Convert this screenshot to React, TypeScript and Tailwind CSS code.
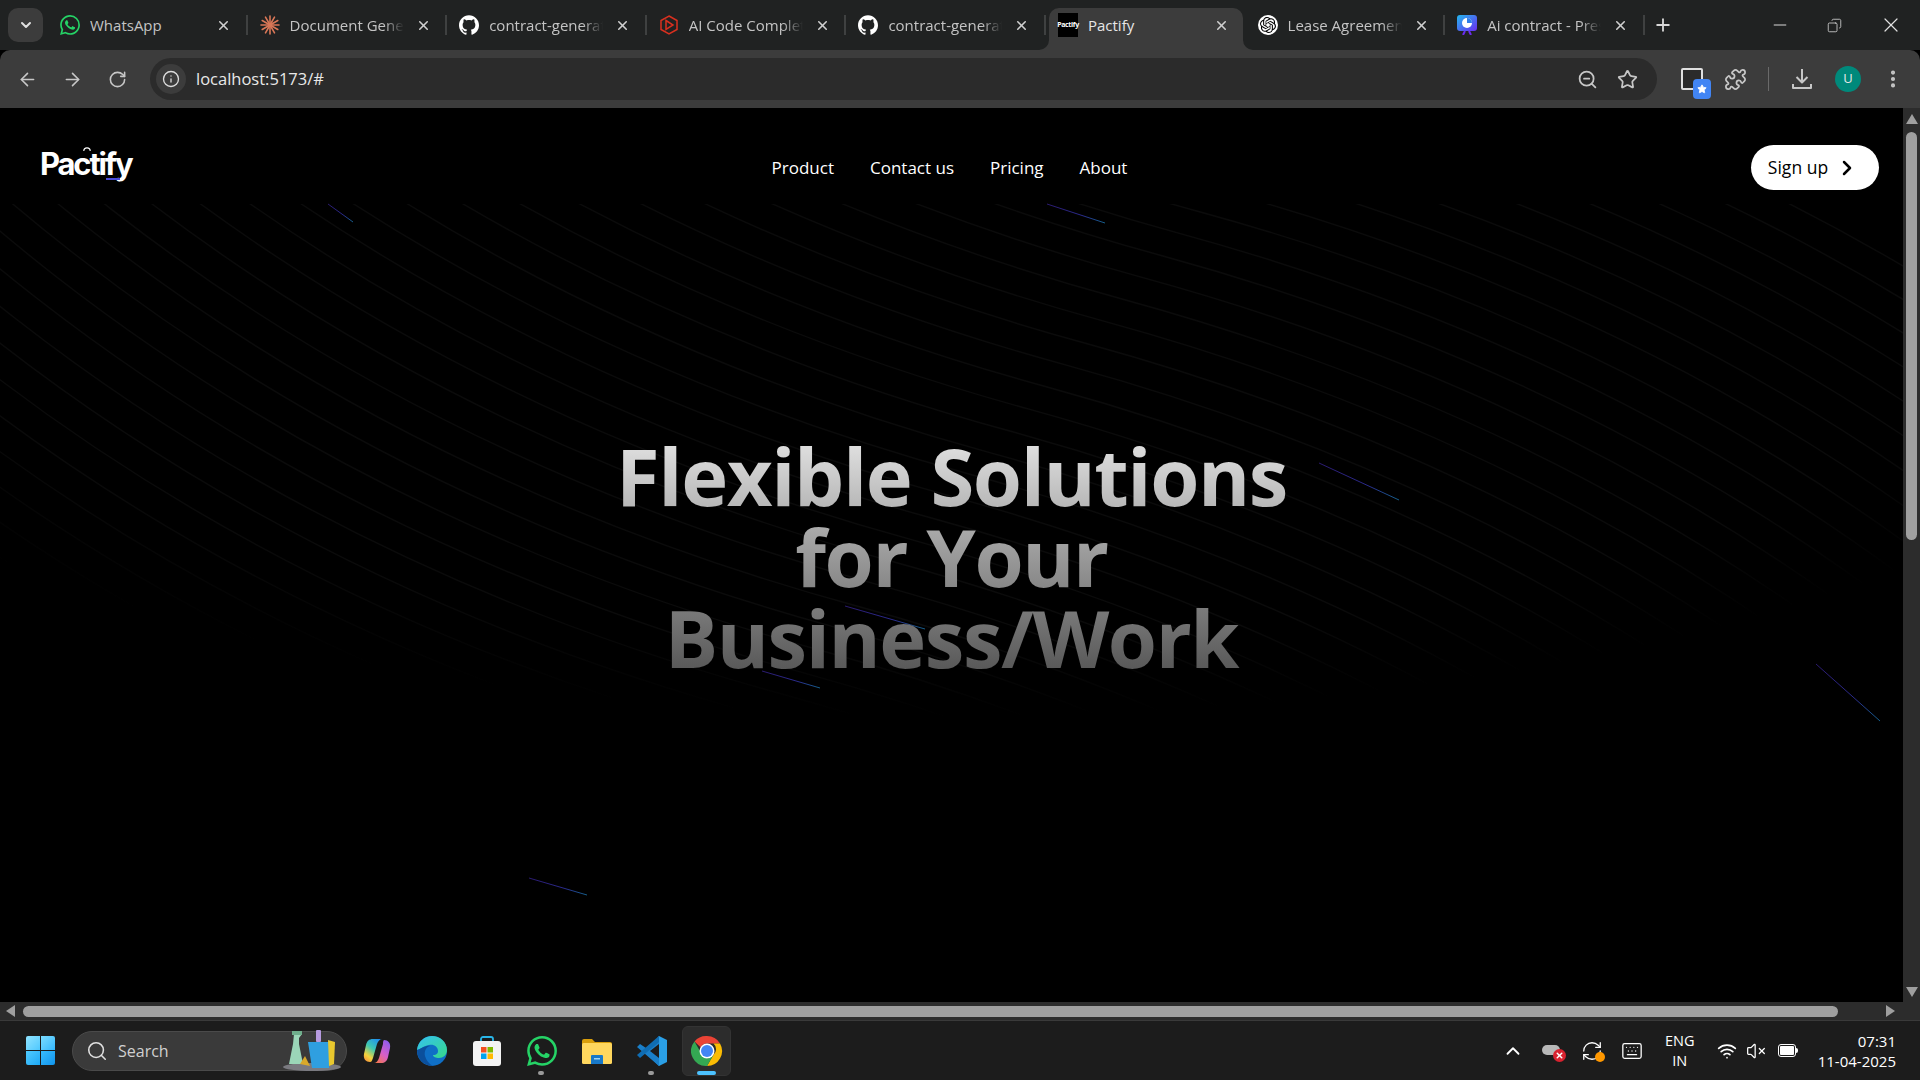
import React from 'react';
import { ArrowLeft, ArrowRight, RotateCw, Info, ZoomOut, Star, Puzzle, ChevronDown, ChevronRight, ChevronUp, X, Plus, Minus, EllipsisVertical, Search, Wifi, VolumeX, RefreshCw, Keyboard, Copy } from 'lucide-react';
import { SiWhatsapp, SiGithub, SiOpenai } from 'react-icons/si';

const FONT = "font-['Open_Sans',sans-serif]";

// same beam paths as the hero background: each one is shifted by a fixed step
const PATHS = Array.from({ length: 50 }, (_, i) => {
  const dx = 7 * i;
  const dy = -8 * i;
  const p = (x: number, y: number) => `${x + dx} ${y + dy}`;
  return `M${p(-380, -189)}C${p(-380, -189)} ${p(-312, 216)} ${p(152, 343)}C${p(616, 470)} ${p(684, 875)} ${p(684, 875)}`;
}).join('');

const BEAMS = [
  [328, 96, 353, 114],
  [1047, 96, 1105, 115],
  [1319, 355, 1399, 392],
  [845, 498, 925, 521],
  [762, 563, 820, 580],
  [529, 770, 587, 787],
  [1816, 556, 1880, 613],
];

function ClaudeIcon() {
  return (
    <svg viewBox="0 0 20 20" className="h-5 w-5" stroke="#d97757" strokeWidth="1.6" strokeLinecap="round">
      {[0, 30, 60, 90, 120, 150, 180, 210, 240, 270, 300, 330].map((a) => (
        <line key={a} x1="10" y1="10" x2="10" y2="1" transform={`rotate(${a} 10 10)`} />
      ))}
    </svg>
  );
}

function CodeIcon() {
  return (
    <svg viewBox="0 0 20 20" className="h-5 w-5" fill="none" stroke="#d9301f" strokeWidth="1.5">
      <path d="M10 1l8 4.5v9L10 19l-8-4.5v-9z" />
      <path d="M7 5.5l7 4.5-7 4.5z" />
    </svg>
  );
}

function SlidesIcon() {
  return (
    <svg viewBox="0 0 20 20" className="h-5 w-5">
      <defs>
        <linearGradient id="slides" x1="0" y1="0" x2="1" y2="1">
          <stop offset="0" stopColor="#22b8ee" />
          <stop offset="1" stopColor="#6b2cf0" />
        </linearGradient>
      </defs>
      <rect x="0" y="0" width="20" height="16" rx="3" fill="url(#slides)" />
      <path d="M6 20l2-4M14 20l-2-4" stroke="#6b2cf0" strokeWidth="2" />
      <circle cx="10" cy="8" r="5" fill="#fff" />
      <path d="M10 8V3a5 5 0 0 1 5 5z" fill="#2f7fe8" />
    </svg>
  );
}

const TABS: { title: string; icon: React.ReactNode; active?: boolean }[] = [
  { title: 'WhatsApp', icon: <SiWhatsapp className="h-5 w-5 text-[#25d366]" /> },
  { title: 'Document Generator', icon: <ClaudeIcon /> },
  { title: 'contract-generator', icon: <SiGithub className="h-5 w-5 text-white" /> },
  { title: 'AI Code Completion', icon: <CodeIcon /> },
  { title: 'contract-generator', icon: <SiGithub className="h-5 w-5 text-white" /> },
  {
    title: 'Pactify',
    active: true,
    icon: (
      <span className="flex h-6 w-5 items-center justify-center bg-black text-[7px] font-bold tracking-tighter text-white">Pactify</span>
    ),
  },
  {
    title: 'Lease Agreement',
    icon: (
      <span className="flex h-5 w-5 items-center justify-center rounded-full bg-white">
        <SiOpenai className="h-4 w-4 text-black" />
      </span>
    ),
  },
  { title: 'Ai contract - Presentation', icon: <SlidesIcon /> },
];

function Tab({ title, icon, active }: { title: string; icon: React.ReactNode; active?: boolean }) {
  return (
    <div className="relative flex h-[50px] w-[199.6px] shrink-0 items-center">
      {active && (
        <div className="absolute inset-x-[3px] bottom-0 top-2 rounded-t-[10px] bg-[#3c3c3c]">
          <svg viewBox="0 0 10 10" className="absolute -left-2.5 bottom-0 h-2.5 w-2.5"><path d="M10 0v10H0a10 10 0 0 0 10-10z" fill="#3c3c3c" /></svg>
          <svg viewBox="0 0 10 10" className="absolute -right-2.5 bottom-0 h-2.5 w-2.5"><path d="M0 0v10h10A10 10 0 0 1 0 0z" fill="#3c3c3c" /></svg>
        </div>
      )}
      <div className="relative ml-[12px] flex w-5 items-center justify-center">{icon}</div>
      <span
        className={`relative ml-[10px] w-[114px] overflow-hidden whitespace-nowrap text-[15px] ${active ? 'text-[#e6e6e6]' : 'text-[#c4c4c4]'} ${title.length > 9 ? '[mask-image:linear-gradient(to_right,black_82%,transparent)]' : ''}`}
      >
        {title}
      </span>
      <X className="relative ml-[12px] h-[15px] w-[15px] text-[#d0d0d0]" strokeWidth={2.5} />
      {!active && <div className="absolute right-[0px] top-[15px] h-[20px] w-[2px] bg-[#3f4141]" />}
    </div>
  );
}

function Chrome() {
  return (
    <svg viewBox="0 0 32 32" className="h-8 w-8">
      <path d="M16 1a15 15 0 0 1 13 7.5H16a7.5 7.5 0 0 0-6.5 3.8L3.5 6.5A15 15 0 0 1 16 1z" fill="#ea4335" />
      <path d="M29 8.5A15 15 0 0 1 16 31l6.5-11.2a7.5 7.5 0 0 0 0-11.3z" fill="#fbbc04" />
      <path d="M16 31A15 15 0 0 1 3.5 6.5l6 10.5a7.5 7.5 0 0 0 7.5 6.4l5.5-3.6z" fill="#34a853" />
      <circle cx="16" cy="16" r="7.5" fill="#fff" />
      <circle cx="16" cy="16" r="6" fill="#4285f4" />
    </svg>
  );
}

function Edge() {
  return (
    <svg viewBox="0 0 32 32" className="h-8 w-8">
      <defs>
        <linearGradient id="edgeA" x1="0" y1="0" x2="1" y2="1">
          <stop offset="0" stopColor="#35c1f1" />
          <stop offset="1" stopColor="#36d98a" />
        </linearGradient>
      </defs>
      <circle cx="16" cy="16" r="15" fill="#0f6fc6" />
      <path d="M1 15C2 6 9 1 16 1c8 0 15 6 15 14 0 5-4 8-8 8-3 0-6-1-6-3 4 0 5-2 5-4 0-4-4-7-9-6-6 1-10 5-12 5z" fill="url(#edgeA)" />
      <path d="M14 11c-4 1-6 5-5 10 1 4 4 8 8 10-8 0-16-6-16-16 3 0 8-5 13-4z" fill="#0b4f9c" />
    </svg>
  );
}

function Store() {
  return (
    <svg viewBox="0 0 32 32" className="h-8 w-8">
      <path d="M10 7V4a2 2 0 0 1 2-2h8a2 2 0 0 1 2 2v3" fill="none" stroke="#29b6e8" strokeWidth="1.8" />
      <rect x="2" y="6" width="28" height="25" rx="3" fill="#f3f3f3" />
      <rect x="10" y="12" width="5.5" height="5.5" fill="#f25022" />
      <rect x="16.5" y="12" width="5.5" height="5.5" fill="#7fba00" />
      <rect x="10" y="18.5" width="5.5" height="5.5" fill="#00a4ef" />
      <rect x="16.5" y="18.5" width="5.5" height="5.5" fill="#ffb900" />
    </svg>
  );
}

function Folder() {
  return (
    <svg viewBox="0 0 32 32" className="h-8 w-8">
      <path d="M1 6a2 2 0 0 1 2-2h8l3 3h15a2 2 0 0 1 2 2v3H1z" fill="#d99e0b" />
      <rect x="1" y="8" width="30" height="21" rx="1.5" fill="#ffd75e" />
      <path d="M10 21a1 1 0 0 1 1-1h10a1 1 0 0 1 1 1v8H10z" fill="#1878c8" />
      <rect x="13" y="23" width="6" height="1.5" fill="#9fd4f5" />
    </svg>
  );
}

function VsCode() {
  return (
    <svg viewBox="0 0 32 32" className="h-8 w-8">
      <path d="M23 1l8 4v22l-8 4-13-13z" fill="#2a9fe6" />
      <path d="M23 1v30L1 12l3-3 9 6z" fill="#1a7fc9" />
      <path d="M1 20l3 3 19-16V1z" fill="#0f6db3" />
      <path d="M23 9v14l-9-7z" fill="#1c1c1c" />
    </svg>
  );
}

function Copilot() {
  return (
    <svg viewBox="0 0 32 32" className="h-8 w-8">
      <defs>
        <linearGradient id="copA" x1="0.8" y1="0" x2="0.2" y2="1">
          <stop offset="0" stopColor="#1f8ff0" />
          <stop offset="0.45" stopColor="#3fc9b0" />
          <stop offset="0.8" stopColor="#f5d33c" />
          <stop offset="1" stopColor="#f39a3c" />
        </linearGradient>
        <linearGradient id="copB" x1="0.8" y1="0" x2="0.2" y2="1">
          <stop offset="0" stopColor="#8d5cf0" />
          <stop offset="0.55" stopColor="#d75fc8" />
          <stop offset="1" stopColor="#f5764f" />
        </linearGradient>
      </defs>
      <path d="M23 5c4 0 7 3 6 8l-2 9c-1 4-3 6-7 6h-7c2 0 4-2 5-5l4-14c0-2 0-3 1-4z" fill="url(#copB)" />
      <path d="M9 27c-4 0-7-3-6-8l2-9c1-4 3-6 7-6h9c-2 0-4 2-5 5l-4 14c-1 2-1 4-3 4z" fill="url(#copA)" />
    </svg>
  );
}

function Cleaning() {
  return (
    <svg viewBox="0 0 60 44" className="h-[44px] w-[60px]">
      <ellipse cx="30" cy="39" rx="29" ry="4" fill="#7a7a80" />
      <path d="M12 6h8l-3 4v6l4 20H7l4-20z" fill="#9bd6b8" />
      <rect x="10" y="3" width="10" height="4" fill="#6fae8c" />
      <rect x="34" y="2" width="5" height="12" rx="1" fill="#b79be0" />
      <path d="M26 14h24l-3 26H30z" fill="#2f9fe0" />
      <path d="M46 12l7 2-1 22-5 2z" fill="#e9c82e" />
      <path d="M18 36l5-8 5 10z" fill="#d9a92a" />
    </svg>
  );
}

function Triangle({ dir, className }: { dir: 'up' | 'down' | 'left' | 'right'; className?: string }) {
  const shape = {
    up: '0,10 5,0 10,10',
    down: '0,0 10,0 5,10',
    left: '10,0 10,10 0,5',
    right: '0,0 0,10 10,5',
  }[dir];
  return (
    <svg viewBox="0 0 10 10" preserveAspectRatio="none" className={className}>
      <polygon points={shape} fill="#9f9f9f" />
    </svg>
  );
}

function TaskIcon({ children, dot, active }: { children: React.ReactNode; dot?: boolean; active?: boolean }) {
  return (
    <div className="relative flex h-[50px] w-[55px] items-center justify-center">
      {active && <div className="absolute inset-y-0 left-[3px] w-[49px] rounded-md border border-[#333] bg-[#2c2c2c]" />}
      <div className="relative">{children}</div>
      {dot && <div className="absolute bottom-[1px] left-[24px] h-[4px] w-[6px] rounded-full bg-[#9a9a9a]" />}
      {active && <div className="absolute bottom-[1px] left-[18px] h-[4px] w-[19px] rounded-full bg-[#4cc2ff]" />}
    </div>
  );
}

export default function App() {
  return (
    <div className={`flex h-screen w-full flex-col overflow-hidden bg-black ${FONT}`}>
      {/* tab strip */}
      <div className="flex h-[50px] shrink-0 items-center bg-[#202222]">
        <div className="ml-[8px] mr-[5px] flex h-[34px] w-[35px] shrink-0 items-center justify-center rounded-[10px] bg-[#3c3c3c]">
          <ChevronDown className="h-4 w-4 text-[#e0e0e0]" strokeWidth={3} />
        </div>
        {TABS.map((t, i) => (
          <Tab key={i} title={t.title} icon={t.icon} active={t.active} />
        ))}
        <Plus className="ml-[8px] h-5 w-5 text-[#d8d8d8]" strokeWidth={2.2} />
        <div className="ml-auto flex items-center">
          <div className="flex w-[55px] justify-center"><Minus className="h-5 w-5 text-[#d8d8d8]" strokeWidth={1.2} /></div>
          <div className="flex w-[55px] justify-center"><Copy className="h-[15px] w-[15px] -scale-x-100 text-[#d8d8d8]" strokeWidth={1.3} /></div>
          <div className="flex w-[58px] justify-center"><X className="h-6 w-6 text-[#e0e0e0]" strokeWidth={1.2} /></div>
        </div>
      </div>

      {/* toolbar */}
      <div className="flex h-[58px] shrink-0 items-center rounded-t-[10px] bg-[#3c3c3c] pl-[9px] text-[#c7c7c7]">
        <div className="flex w-[36px] justify-center"><ArrowLeft className="h-[21px] w-[21px]" strokeWidth={1.8} /></div>
        <div className="ml-[9px] flex w-[36px] justify-center"><ArrowRight className="h-[21px] w-[21px]" strokeWidth={1.8} /></div>
        <div className="ml-[9px] flex w-[36px] justify-center"><RotateCw className="h-[19px] w-[19px]" strokeWidth={2} /></div>
        <div className="ml-[15px] flex h-[42px] w-[1507px] items-center rounded-full bg-[#2b2b2b]">
          <div className="ml-[6px] flex h-[30px] w-[30px] items-center justify-center rounded-full bg-[#3c3c3c]">
            <Info className="h-[18px] w-[18px] text-[#dcdcdc]" strokeWidth={1.8} />
          </div>
          <span className="ml-[10px] text-[16.5px] text-[#e8e8e8]">localhost:5173/#</span>
          <ZoomOut className="ml-auto h-[21px] w-[21px]" strokeWidth={2} />
          <Star className="ml-[19px] mr-[19px] h-[21px] w-[21px]" strokeWidth={2} />
        </div>
        <div className="relative ml-[24px] h-[22px] w-[22px] rounded-[2px] border-2 border-[#e0e0e0] bg-[#2b2b2b]">
          <div className="absolute -bottom-[11px] -right-[10px] flex h-[20px] w-[18px] items-center justify-center rounded-[4px] bg-[#4285f4]">
            <Star className="h-[10px] w-[10px] fill-white text-white" />
          </div>
        </div>
        <Puzzle className="ml-[21px] h-[23px] w-[23px]" strokeWidth={1.8} />
        <div className="ml-[21px] h-[24px] w-[1px] bg-[#6a6a6a]" />
        <svg viewBox="0 0 24 24" className="ml-[21px] h-[24px] w-[24px]" fill="none" stroke="#c7c7c7" strokeWidth="2" strokeLinejoin="round">
          <path d="M12 2v13M6.5 10l5.5 5.5 5.5-5.5M3 17v4h18v-4" />
        </svg>
        <div className="ml-[21px] flex h-[26px] w-[26px] items-center justify-center rounded-full bg-[#00897b] text-[13px] text-[#e8e8e8]">U</div>
        <EllipsisVertical className="ml-[21px] h-[22px] w-[22px]" strokeWidth={2.5} />
      </div>

      {/* page + vertical scrollbar */}
      <div className="flex min-h-0 flex-1">
        <main className="relative min-w-0 flex-1 overflow-hidden bg-black">
          <div className="absolute inset-x-0 bottom-0 top-[96px] overflow-hidden">
            <svg className="h-full w-full" viewBox="0 0 696 316" preserveAspectRatio="xMidYMid slice" fill="none">
              <defs>
                <radialGradient id="beamFade" cx="0" cy="0" r="1" gradientUnits="userSpaceOnUse" gradientTransform="translate(352 34) rotate(90) scale(555 1560.62)">
                  <stop offset="0.0666" stopColor="#d4d4d4" />
                  <stop offset="0.243" stopColor="#d4d4d4" />
                  <stop offset="0.3" stopColor="#d4d4d4" stopOpacity="0" />
                </radialGradient>
              </defs>
              <path d={PATHS} stroke="url(#beamFade)" strokeOpacity="0.05" strokeWidth="0.5" />
            </svg>
          </div>
          <svg className="absolute inset-0 h-full w-full" fill="none">
            <defs>
              {BEAMS.map(([x1, y1, x2, y2], i) => (
                <linearGradient key={i} id={`beam${i}`} gradientUnits="userSpaceOnUse" x1={x1} y1={y1} x2={x2} y2={y2}>
                  <stop offset="0" stopColor="#2b1a70" />
                  <stop offset="0.6" stopColor="#2a2a8c" />
                  <stop offset="1" stopColor="#15608c" />
                </linearGradient>
              ))}
            </defs>
            {BEAMS.map(([x1, y1, x2, y2], i) => (
              <line key={i} x1={x1} y1={y1} x2={x2} y2={y2} stroke={`url(#beam${i})`} strokeWidth="1" />
            ))}
          </svg>

          <div className="relative flex h-full flex-col">
            <header className="flex items-start justify-between pl-[40px] pr-[24px] pt-[37px]">
              <div className="relative mt-[1px] w-[108px]">
                <span className="font-['Inter',sans-serif] text-[31px] font-bold leading-[36px] tracking-[-0.07em] text-white">Pactify</span>
                <div className="absolute left-[66px] top-[32px] h-[2px] w-[14px] bg-[#4a4ad8]" />
                <svg viewBox="0 0 10 6" className="absolute left-[43px] top-[1px] h-[5px] w-[8px]" fill="none" stroke="#fff" strokeWidth="1.4"><path d="M1 5a4 4 0 0 1 8 0" /></svg>
              </div>
              <nav className="mt-[9px] flex items-center gap-[36px] text-[17px] leading-[28px] text-white">
                <a>Product</a>
                <a>Contact us</a>
                <a>Pricing</a>
                <a>About</a>
              </nav>
              <button className="flex h-[45px] w-[128px] items-center justify-center gap-[7px] rounded-full bg-white pr-[3px] text-[17.5px] text-black">
                Sign up
                <ChevronRight className="h-6 w-6" strokeWidth={2.5} />
              </button>
            </header>
            <div className="mt-[245px] flex justify-center">
              <h1 className="bg-gradient-to-b from-neutral-200 to-neutral-600 bg-clip-text pb-[4px] text-center text-[79.5px] font-bold leading-[81px] tracking-[-0.018em] text-transparent">
                Flexible Solutions
                <br />
                for Your
                <br />
                Business/Work
              </h1>
            </div>
          </div>
        </main>
        <div className="flex w-[17px] shrink-0 flex-col items-center bg-[#2c2c2c] pt-[6px]">
          <Triangle dir="up" className="h-[10px] w-[12px]" />
          <div className="mt-[8px] h-[408px] w-[11px] rounded-full bg-[#9f9f9f]" />
          <Triangle dir="down" className="mb-[5px] mt-auto h-[10px] w-[12px]" />
        </div>
      </div>

      {/* horizontal scrollbar */}
      <div className="flex h-[18px] shrink-0 items-center bg-[#2c2c2c]">
        <Triangle dir="left" className="ml-[6px] h-[12px] w-[9px]" />
        <div className="ml-[8px] h-[11px] w-[1815px] rounded-full bg-[#9f9f9f]" />
        <Triangle dir="right" className="ml-[48px] h-[12px] w-[9px]" />
      </div>

      {/* taskbar */}
      <div className="flex h-[60px] shrink-0 items-center border-t border-[#3a3a3a] bg-[#1c1c1c] text-white">
        <div className="ml-[26px] grid h-[29px] w-[29px] grid-cols-2 gap-[1px]">
          <div className="rounded-tl-[2px] bg-gradient-to-br from-[#8fe4ff] to-[#4cc8ff]" />
          <div className="rounded-tr-[2px] bg-gradient-to-br from-[#7adcff] to-[#2fb8ff]" />
          <div className="rounded-bl-[2px] bg-gradient-to-br from-[#4fcbff] to-[#19a8f5]" />
          <div className="rounded-br-[2px] bg-gradient-to-br from-[#37bdff] to-[#0f94ec]" />
        </div>
        <div className="relative ml-[17px] flex h-[40px] w-[275px] items-center rounded-full border border-[#4a4a4a] bg-[#3a3a3a]">
          <Search className="ml-[13px] h-[22px] w-[22px] text-[#e0e0e0]" strokeWidth={1.7} />
          <span className="ml-[10px] text-[16px] text-[#d0d0d0]">Search</span>
          <div className="absolute bottom-[-2px] right-[4px]"><Cleaning /></div>
        </div>
        <div className="ml-[2px] flex items-center">
          <TaskIcon><Copilot /></TaskIcon>
          <TaskIcon><Edge /></TaskIcon>
          <TaskIcon><Store /></TaskIcon>
          <TaskIcon dot><SiWhatsapp className="h-[30px] w-[30px] text-[#25d366]" /></TaskIcon>
          <TaskIcon><Folder /></TaskIcon>
          <TaskIcon dot><VsCode /></TaskIcon>
          <TaskIcon active><Chrome /></TaskIcon>
        </div>

        <div className="ml-auto flex items-center">
          <ChevronUp className="h-[22px] w-[22px] text-white" strokeWidth={2} />
          <div className="relative ml-[18px] h-[22px] w-[22px]">
            <div className="absolute left-0 top-[5px] h-[10px] w-[18px] rounded-full bg-[#b8b8b8]" />
            <div className="absolute bottom-0 right-[-2px] flex h-[13px] w-[13px] items-center justify-center rounded-full bg-[#d8222f]">
              <X className="h-[9px] w-[9px] text-white" strokeWidth={4} />
            </div>
          </div>
          <div className="relative ml-[17px] h-[22px] w-[22px]">
            <RefreshCw className="h-[22px] w-[22px] text-white" strokeWidth={1.4} />
            <div className="absolute bottom-0 right-[-2px] h-[10px] w-[10px] rounded-full bg-[#ff9800]" />
          </div>
          <Keyboard className="ml-[18px] h-[22px] w-[22px] text-white" strokeWidth={1.4} />
          <div className="ml-[13px] w-[48px] text-center text-[14.5px] leading-[20px]">
            ENG
            <br />
            IN
          </div>
          <Wifi className="ml-[13px] h-[20px] w-[20px]" strokeWidth={2} />
          <VolumeX className="ml-[9px] h-[20px] w-[20px]" strokeWidth={1.5} />
          <div className="ml-[12px] flex h-[13px] w-[18px] items-center rounded-[3px] border border-white p-[1px]">
            <div className="h-full w-full rounded-[1px] bg-white" />
          </div>
          <div className="h-[5px] w-[2px] rounded-r-sm bg-white" />
          <div className="ml-[20px] mr-[24px] text-right text-[15px] leading-[20px]">
            07:31
            <br />
            11-04-2025
          </div>
        </div>
      </div>
    </div>
  );
}
